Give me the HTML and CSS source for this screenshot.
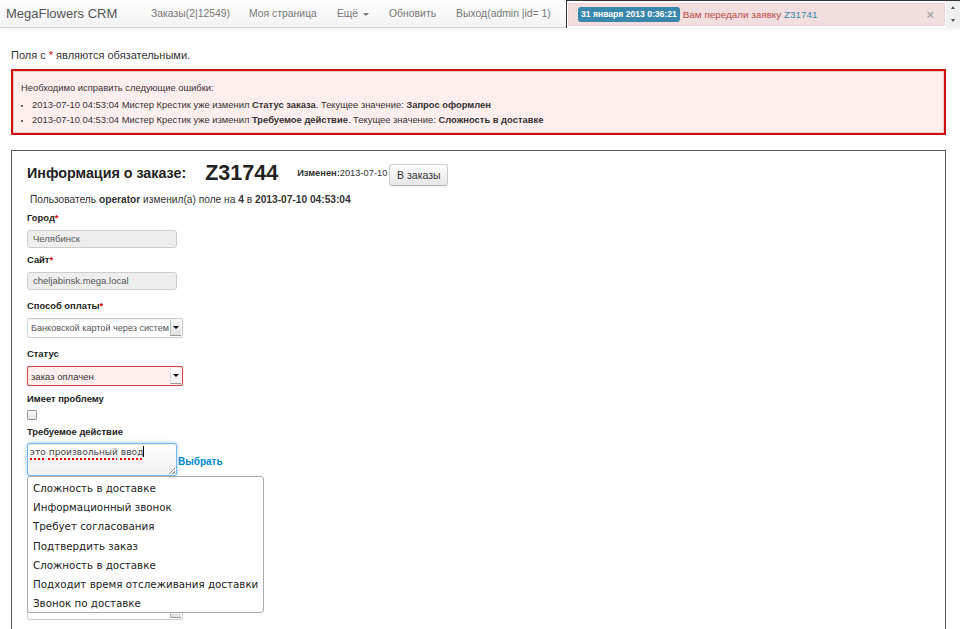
FILE: index.html
```html
<!DOCTYPE html>
<html>
<head>
<meta charset="utf-8">
<link rel="stylesheet" href="styles.css">
</head>
<body>
<div class="navbar">
  <a class="brand">MegaFlowers CRM</a>
  <ul class="nav">
    <li><a>Заказы(2|12549)</a></li>
    <li><a>Моя страница</a></li>
    <li><a>Ещё <span class="caret"></span></a></li>
    <li><a>Обновить</a></li>
    <li><a>Выход(admin |id= 1)</a></li>
  </ul>
  <div class="notify">
    <div class="notify-alert">
      <span class="badge">31 января 2013 0:36:21</span>
      <span class="notify-text">Вам передали заявку <a class="notify-link">Z31741</a></span>
      <span class="close">×</span>
    </div>
    <div class="scrollbar">
      <span class="arrow-up"></span>
      <span class="arrow-down"></span>
    </div>
  </div>
</div>

<div class="page">
  <p class="note">Поля с <span class="req">*</span> являются обязательными.</p>

  <div class="error-summary">
    <p>Необходимо исправить следующие ошибки:</p>
    <ul>
      <li>2013-07-10 04:53:04 Мистер Крестик уже изменил <b>Статус заказа</b>. Текущее значение: <b>Запрос оформлен</b></li>
      <li>2013-07-10 04:53:04 Мистер Крестик уже изменил <b>Требуемое действие</b>. Текущее значение: <b>Сложность в доставке</b></li>
    </ul>
  </div>

  <div class="order-box">
    <div class="order-head">
      <h2 class="order-title">Информация о заказе:</h2>
      <span class="order-num">Z31744</span>
      <span class="changed"><b>Изменен:</b>2013-07-10</span>
      <button class="btn">В заказы</button>
    </div>
    <p class="user-change">Пользователь <b>operator</b> изменил(а) поле на <b>4</b> в <b>2013-07-10 04:53:04</b></p>

    <div class="form">
      <label class="lbl l-city">Город<span class="req">*</span></label>
      <div class="input disabled">Челябинск</div>

      <label class="lbl l-site">Сайт<span class="req">*</span></label>
      <div class="input disabled">cheljabinsk.mega.local</div>

      <label class="lbl l-gap">Способ оплаты<span class="req">*</span></label>
      <div class="select"><span class="select-text">Банковской картой через систем</span><span class="select-btn"><span class="tri"></span></span></div>

      <label class="lbl l-gap">Статус</label>
      <div class="select error"><span class="select-text">заказ оплачен</span><span class="select-btn"><span class="tri"></span></span></div>

      <label class="lbl l-tight">Имеет проблему</label>
      <span class="checkbox"></span>

      <label class="lbl l-action">Требуемое действие</label>
      <div class="action-row">
        <div class="textarea"><span class="typo">это</span> <span class="typo">произвольный</span> <span class="typo">ввод</span><span class="cursor"></span><span class="grip"></span></div>
        <a class="pick">Выбрать</a>
        <ul class="menu">
          <li>Сложность в доставке</li>
          <li>Информационный звонок</li>
          <li>Требует согласования</li>
          <li>Подтвердить заказ</li>
          <li>Сложность в доставке</li>
          <li>Подходит время отслеживания доставки</li>
          <li>Звонок по доставке</li>
        </ul>
      </div>

      <label class="lbl hidden-lbl">Комментарий</label>
      <div class="select"><span class="select-text"></span><span class="select-btn"><span class="tri"></span></span></div>
    </div>
  </div>
</div>
</body>
</html>
```

FILE: styles.css
```css
* { box-sizing: border-box; }
html, body { margin: 0; padding: 0; }
body {
  font-family: "Liberation Sans", Arial, sans-serif;
  font-size: 11px;
  color: #333;
  background: #fff;
  overflow: hidden;
  height: 629px;
}
a { text-decoration: none; cursor: pointer; }

/* navbar */
.navbar {
  height: 28px;
  display: flex;
  align-items: stretch;
  background: linear-gradient(#ffffff, #f2f2f2);
  border-bottom: 1px solid #d4d4d4;
  box-shadow: 0 1px 4px rgba(0,0,0,0.07);
}
.brand {
  flex-shrink: 0;
  font-size: 13px;
  color: #555;
  padding: 0 0 0 6px;
  line-height: 27px;
  width: 141px;
  white-space: nowrap;
}
.nav {
  flex-shrink: 0;
  list-style: none;
  margin: 0;
  padding: 0;
  display: flex;
}
.nav li a {
  display: block;
  line-height: 27px;
  color: #777;
  font-size: 10.4px;
  padding: 0 10px 0 10px;
  white-space: nowrap;
}
.nav li:first-child a { padding-right: 9px; }
.caret {
  display: inline-block;
  width: 0; height: 0;
  border-left: 3px solid transparent;
  border-right: 3px solid transparent;
  border-top: 3px solid #777;
  vertical-align: middle;
  margin-left: 2px;
}
.notify {
  flex-shrink: 0;
  margin-left: auto;
  width: 394px;
  height: 28px;
  border-left: 1px solid #333;
  border-top: 1px solid #333;
  display: flex;
  background: #fff;
}
.notify-alert {
  flex: 1;
  margin: 2px 1px 2px 1px;
  background: #f2dede;
  border: 1px solid #eed3d7;
  display: flex;
  align-items: center;
  padding-left: 9px;
  color: #b94a48;
  font-size: 9.9px;
  white-space: nowrap;
}
.badge {
  background: #3a87ad;
  color: #fff;
  font-weight: bold;
  font-size: 8.6px;
  padding: 2px 3px;
  border-radius: 3px;
  margin-right: 3px;
  line-height: 11px;
}
.notify-link { color: #3a87ad; }
.close {
  margin-left: auto;
  margin-right: 10px;
  color: #aaa;
  font-weight: bold;
  font-size: 13px;
}
.scrollbar {
  width: 14px;
  background: #f0f0f0;
  display: flex;
  flex-direction: column;
  justify-content: space-between;
  align-items: center;
  padding: 5px 0 6px;
}
.arrow-up, .arrow-down {
  width: 0; height: 0;
  border-left: 2.5px solid transparent;
  border-right: 2.5px solid transparent;
}
.arrow-up { border-bottom: 3px solid #555; }
.arrow-down { border-top: 3px solid #555; }

/* page */
.page {
  width: 935px;
  margin-left: 11px;
}
.note {
  margin: 20px 0 0 0;
  line-height: 14px;
}
.req { color: #c00; }
.error-summary {
  margin-top: 7px;
  border: 2px solid #cc1111;
  background: #ffeeee;
  padding: 10px 8px 8px 8px;
  height: 66px;
  font-size: 9.4px;
  box-shadow: inset 0 0 0 1px #f8c8c8;
}
.error-summary p { margin: 0 0 3px 0; line-height: 13px; }
.error-summary ul { margin: 0; padding-left: 11px; }
.error-summary li { line-height: 15px; }
.error-summary li::marker { font-size: 7px; }

.order-box {
  margin-top: 15px;
  border: 1px solid #555;
  border-bottom: none;
  height: 490px;
  padding: 8px 15px 0 15px;
}
.order-head {
  display: flex;
  align-items: center;
  height: 28px;
}
.order-title {
  margin: 0;
  font-size: 14.3px;
  font-weight: bold;
  color: #222;
  white-space: nowrap;
}
.order-num {
  font-size: 21.5px;
  font-weight: bold;
  color: #222;
  margin-left: 19px;
}
.changed {
  font-size: 9.3px;
  margin-left: 19px;
  color: #333;
  white-space: nowrap;
}
.btn {
  margin: 4px 0 0 2px;
  font-family: "Liberation Sans", Arial, sans-serif;
  font-size: 10.5px;
  color: #333;
  height: 22px;
  width: 59px;
  padding: 0;
  border: 1px solid #ccc;
  border-bottom-color: #b3b3b3;
  border-radius: 3px;
  background: linear-gradient(#ffffff, #e6e6e6);
  box-shadow: inset 0 1px 0 rgba(255,255,255,.2), 0 1px 2px rgba(0,0,0,.05);
}
.user-change {
  margin: 6px 0 0 3px;
  line-height: 14px;
  font-size: 10.2px;
}

.form {
  display: flex;
  flex-direction: column;
  align-items: flex-start;
}
.lbl {
  font-weight: bold;
  font-size: 9.4px;
  line-height: 13px;
  margin-bottom: 6.5px;
  color: #222;
}
.l-city { margin-top: 3.5px; }
.l-site { margin-top: 4.5px; }
.l-gap { margin-top: 8.5px; }
.l-tight { margin-top: 5.5px; margin-bottom: 5.5px; }
.l-action { margin-top: 4.5px; margin-bottom: 5.5px; }
.input {
  width: 150px;
  height: 18px;
  border: 1px solid #ccc;
  border-radius: 3px;
  padding: 0 5px;
  line-height: 16px;
  font-size: 9.5px;
  color: #555;
}
.input.disabled { background: #eeeeee; }
.select {
  width: 156px;
  height: 20px;
  border: 1px solid #ccc;
  border-radius: 2px;
  display: flex;
  align-items: center;
  background: #fff;
  box-shadow: inset 0 1px 1px rgba(0,0,0,.05);
}
.select-text {
  flex: 1;
  padding-left: 3px;
  font-size: 9.1px;
  color: #555;
  white-space: nowrap;
  overflow: hidden;
}
.select-btn {
  flex-shrink: 0;
  width: 11px;
  height: 16px;
  margin-right: 1px;
  background: linear-gradient(#fafafa, #e0e0e0);
  border-left: 1px solid #bbb;
  border-bottom: 1px solid #999;
  display: flex;
  align-items: center;
  justify-content: center;
}
.tri {
  width: 0; height: 0;
  border-left: 3px solid transparent;
  border-right: 3px solid transparent;
  border-top: 3px solid #000;
}
.select.error {
  border-color: #d34545;
  background: #ffeeee;
  box-shadow: 0 0 1px rgba(200,0,0,.4);
}
.select.error .select-text { color: #333; font-size: 9.5px; }
.select.error .select-btn { background: linear-gradient(#ffffff, #f0f0f0); border-left-color: #ddd; }
.checkbox {
  width: 10px;
  height: 10px;
  border: 1px solid #999;
  border-radius: 1px;
  background: linear-gradient(#fdfdfd, #e4e4e4);
}
.action-row {
  position: relative;
  display: flex;
  align-items: flex-end;
}
.textarea {
  position: relative;
  width: 150px;
  height: 33px;
  border: 1px solid rgba(82,168,236,.8);
  border-radius: 3px;
  box-shadow: inset 0 1px 1px rgba(0,0,0,.075), 0 0 4px rgba(82,168,236,.6);
  background: linear-gradient(#ffffff, #f0f0f0);
  padding: 2px 2px;
  font-family: "DejaVu Sans", Verdana, sans-serif;
  font-size: 9.1px;
  color: #444;
  line-height: 12px;
}
.typo {
  text-decoration: underline dotted #e00;
  text-decoration-thickness: 2px;
  text-underline-offset: 3px;
}
.cursor {
  display: inline-block;
  width: 1px;
  height: 11px;
  background: #000;
  vertical-align: -2px;
}
.grip {
  position: absolute;
  right: 1px;
  bottom: 1px;
  width: 6px;
  height: 6px;
  background: linear-gradient(135deg, transparent 45%, #999 45%, #999 55%, transparent 55%, transparent 75%, #999 75%, #999 85%, transparent 85%);
}
.pick {
  color: #0088cc;
  font-weight: bold;
  font-size: 10px;
  margin-left: 1px;
  margin-bottom: 9px;
}
.hidden-lbl { visibility: hidden; margin-top: 104.5px; }

.menu {
  position: absolute;
  left: 0;
  top: 100%;
  width: 237px;
  margin: 0;
  padding: 2px 0 0 0;
  list-style: none;
  background: #fff;
  border: 1px solid #aaa;
  border-radius: 3px;
  height: 137px;
  font-family: "DejaVu Sans", Verdana, sans-serif;
  font-size: 10.3px;
  color: #222;
  z-index: 2;
}
.menu li {
  line-height: 19.2px;
  padding-left: 5px;
  white-space: nowrap;
}
```
